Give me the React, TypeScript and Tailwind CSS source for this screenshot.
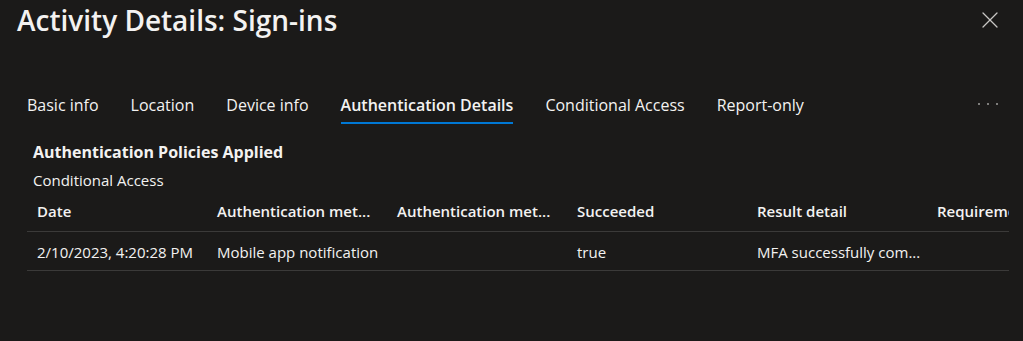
import { X } from "lucide-react";

const tabs = ["Basic info", "Location", "Device info", "Authentication Details", "Conditional Access", "Report-only"];

const columns = ["Date", "Authentication met...", "Authentication met...", "Succeeded", "Result detail", "Requirement"];

const rows = [["2/10/2023, 4:20:28 PM", "Mobile app notification", "", "true", "MFA successfully com...", ""]];

export default function App() {
  const active = 3;

  return (
    <main className="w-[1023px] h-[341px] bg-[#1b1a19] text-[#f3f2f1] overflow-hidden font-['Open_Sans',sans-serif]">
      <div className="flex items-start justify-between pl-[17px] pr-[19px]">
        <h1 className="text-[28px] font-semibold leading-[40px]">Activity Details: Sign-ins</h1>
        <button className="mt-[6px] text-[#c8c6c4]">
          <X className="w-[28px] h-[28px]" strokeWidth={1.1} />
        </button>
      </div>

      <nav className="flex items-center mt-[43px] px-[11px]">
        {tabs.map((tab, i) => (
          <div key={tab} className="relative px-[16px] h-[44px] flex items-center">
            <span className={`text-[16px] ${i === active ? "font-semibold" : ""}`}>{tab}</span>
            {i === active && <div className="absolute left-[16px] right-[16px] bottom-[3px] h-[2px] bg-[#0078d4]" />}
          </div>
        ))}
        <div className="ml-auto mr-[14px] flex gap-[7px] pb-[3px]">
          <span className="w-[2px] h-[2px] rounded-full bg-[#a19f9d]" />
          <span className="w-[2px] h-[2px] rounded-full bg-[#a19f9d]" />
          <span className="w-[2px] h-[2px] rounded-full bg-[#a19f9d]" />
        </div>
      </nav>

      <section className="pl-[33px] pt-[15px]">
        <h2 className="text-[16px] font-bold leading-[20px]">Authentication Policies Applied</h2>
        <div className="text-[15px] leading-[20px] mt-[8px]">Conditional Access</div>
      </section>

      <div className="ml-[27px] mr-[14px] mt-[1px] overflow-hidden">
        <div className="grid grid-cols-[180px_180px_180px_180px_180px_180px] border-b border-[#3b3a39] h-[41px] items-center">
          {columns.map((c, i) => (
            <div key={i} className="pl-[10px] text-[15px] font-semibold whitespace-nowrap overflow-hidden">{c}</div>
          ))}
        </div>
        {rows.map((r, ri) => (
          <div key={ri} className="grid grid-cols-[180px_180px_180px_180px_180px_180px] border-b border-[#3b3a39] h-[39px] items-center pt-[2px]">
            {r.map((c, i) => (
              <div key={i} className="pl-[10px] text-[15px] whitespace-nowrap overflow-hidden">{c}</div>
            ))}
          </div>
        ))}
      </div>
    </main>
  );
}
